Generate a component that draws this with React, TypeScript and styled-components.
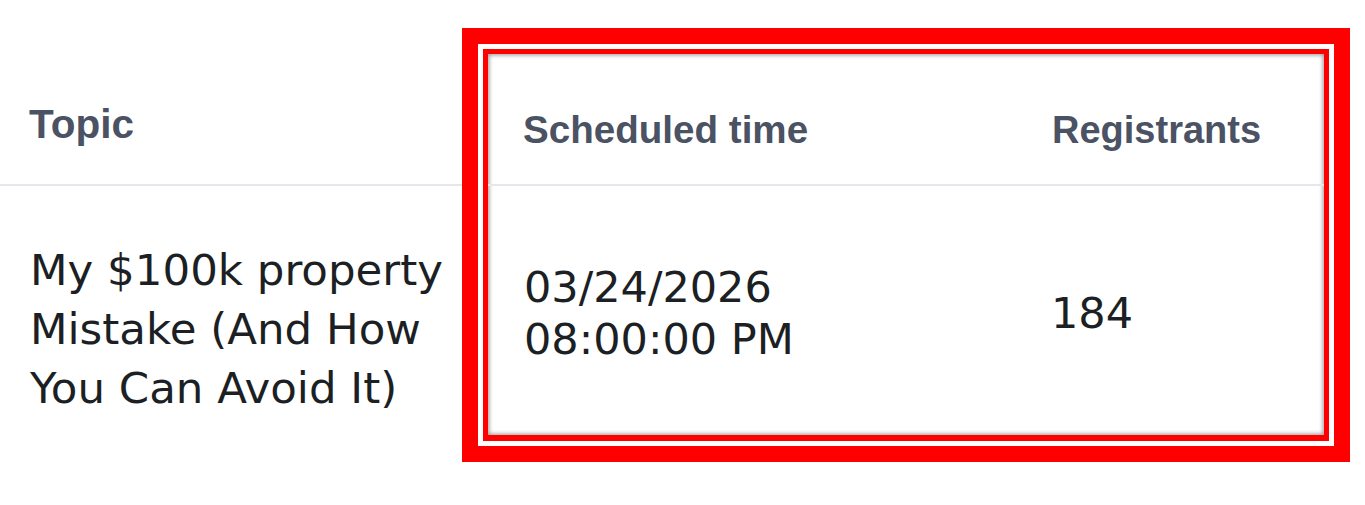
import React from "react";
import styled, { createGlobalStyle } from "styled-components";

const GlobalStyle = createGlobalStyle`
  html, body {
    margin: 0;
    padding: 0;
    background: #ffffff;
  }
  body {
    overflow: hidden;
    font-family: "Liberation Sans", Arial, sans-serif;
  }
`;

const Page = styled.div`
  display: flex;
  align-items: flex-start;
  width: 1365px;
  height: 505px;
`;

const TopicColumn = styled.div`
  flex: none;
  width: 462px;
  display: flex;
  flex-direction: column;
`;

const HeadCell = styled.div<{ $height: number; $padTop: number; $padLeft: number; $size: number }>`
  box-sizing: border-box;
  height: ${(p) => p.$height}px;
  padding: ${(p) => p.$padTop}px 0 0 ${(p) => p.$padLeft}px;
  border-bottom: 2px solid #e4e7eb;
  font-family: "Liberation Sans", Arial, sans-serif;
  font-weight: 700;
  font-size: ${(p) => p.$size}px;
  line-height: 44px;
  color: #4a5263;
  white-space: nowrap;
`;

const TopicText = styled.div`
  box-sizing: border-box;
  padding: 55px 0 0 30px;
  width: 462px;
  font-family: "DejaVu Sans", "Liberation Sans", sans-serif;
  font-size: 43.5px;
  line-height: 59px;
  color: #1c1f24;
`;

const Highlight = styled.div`
  flex: none;
  box-sizing: border-box;
  margin-top: 28px;
  width: 888px;
  border: 16px solid #ff0000;
  padding: 5px;
  background: #ffffff;
`;

const InnerFrame = styled.div`
  border: 5px solid #ff0000;
  border-bottom-width: 6px;
  background: #ffffff;
  box-shadow: inset 0 0 4px 1px rgba(0, 0, 0, 0.42);
  display: grid;
  grid-template-columns: 526px 1fr;
  grid-template-rows: 132px 249px;
`;

const ValueCell = styled.div<{ $padLeft: number }>`
  display: flex;
  align-items: center;
  padding: 4px 0 0 ${(p) => p.$padLeft}px;
  font-family: "DejaVu Sans", "Liberation Sans", sans-serif;
  font-size: 43px;
  line-height: 52px;
  color: #1c1f24;
  white-space: nowrap;
`;

const Lines = styled.div`
  display: flex;
  flex-direction: column;
`;

export default function App() {
  return (
    <>
      <GlobalStyle />
      <Page>
        <TopicColumn>
          <HeadCell $height={186} $padTop={102} $padLeft={29} $size={40.5}>
            Topic
          </HeadCell>
          <TopicText>My $100k property Mistake (And How You Can Avoid It)</TopicText>
        </TopicColumn>
        <Highlight>
          <InnerFrame>
            <HeadCell $height={132} $padTop={54} $padLeft={35} $size={38.6}>
              Scheduled time
            </HeadCell>
            <HeadCell $height={132} $padTop={54} $padLeft={38} $size={38}>
              Registrants
            </HeadCell>
            <ValueCell $padLeft={36}>
              <Lines>
                <span>03/24/2026</span>
                <span>08:00:00 PM</span>
              </Lines>
            </ValueCell>
            <ValueCell $padLeft={37}>184</ValueCell>
          </InnerFrame>
        </Highlight>
      </Page>
    </>
  );
}
